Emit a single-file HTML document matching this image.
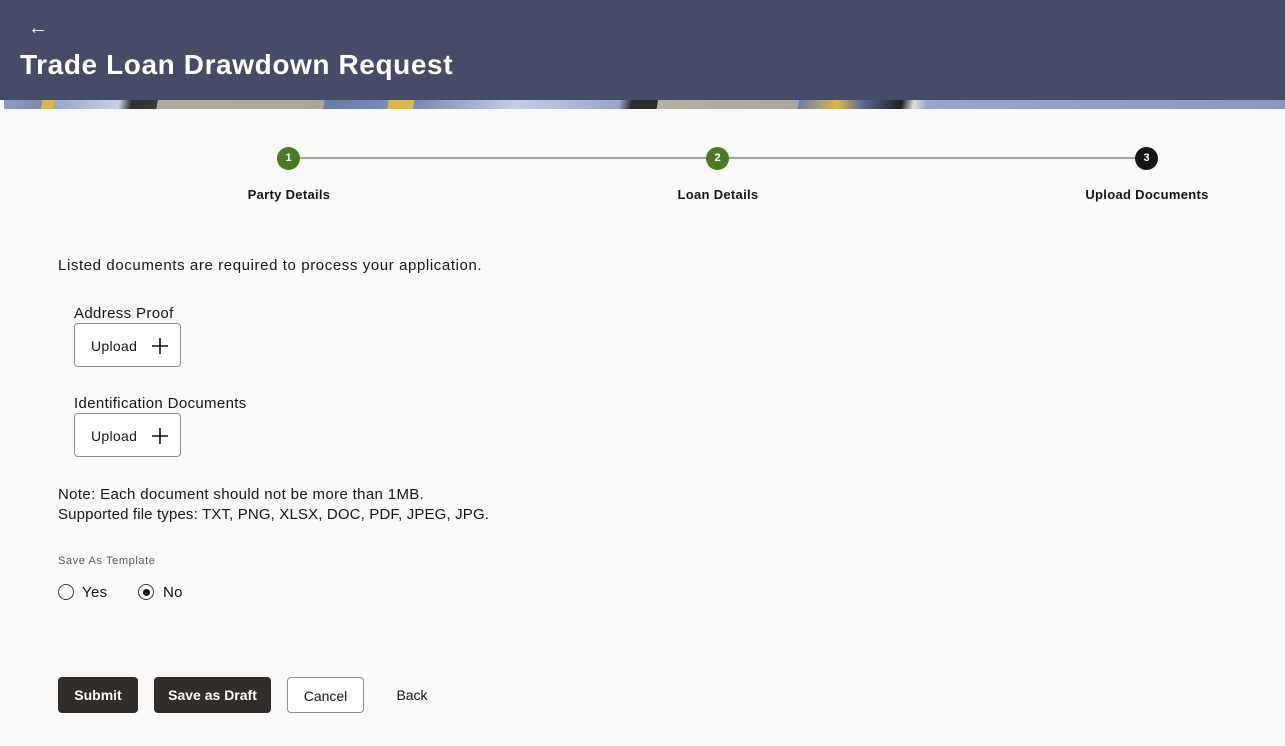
<!DOCTYPE html>
<html><head><meta charset="utf-8"><style>
*{box-sizing:border-box;margin:0;padding:0}
body{width:1285px;height:746px;overflow:hidden;background:#faf9f8;font-family:"Liberation Sans",sans-serif;color:#161513;position:relative}
.hdr{position:absolute;left:0;top:0;width:1285px;height:100px;background:#464b68}
.band{position:absolute;left:4px;top:100px;width:1281px;height:9px;background:linear-gradient(100deg,#8f9bc0 0,#7e8ab0 3%,#d8b84a 3%,#d8b84a 4%,#9aa6c8 4%,#c9d0e8 9%,#2e2e30 10%,#3a3a3a 12%,#b0aaa0 12%,#aaa59c 25%,#6c7aa8 25%,#7d8ab5 30%,#d9b84c 30%,#d9b84c 32%,#7a86ae 32%,#c5cde8 40%,#9aa4c8 48%,#2d2d30 49%,#2d2d30 51%,#b5b0a8 51%,#a9a59e 62%,#6f7ca8 62%,#dab94a 65%,#5c6894 67%,#1f1f22 70%,#e0e0e0 71%,#9aa5cb 72%,#8a96bd 100%)}
.back{position:absolute;left:28px;top:17px;color:#fff;font-size:20px}
h1{position:absolute;left:20px;top:49px;color:#fff;font-size:28px;font-weight:bold;letter-spacing:0.6px}
.line{position:absolute;top:157px;left:289px;width:858px;height:2px;background:#a6a4a0}
.dot{position:absolute;top:147px;width:23px;height:23px;border-radius:50%;background:#4b7a22;color:#fff;font-size:11px;font-weight:bold;text-align:center;line-height:23px}
.lbl{position:absolute;top:187px;font-size:13px;font-weight:bold;transform:translateX(-50%);white-space:nowrap;letter-spacing:0.3px}
.t{position:absolute;font-size:15px;white-space:nowrap;letter-spacing:0.35px}
.up{position:absolute;left:74px;width:107px;height:44px;border:1px solid #8f8d8a;border-radius:4px;background:#fff;font-size:14px;letter-spacing:0.3px}
.up span{position:absolute;left:16px;top:14px}
.up svg{position:absolute;left:75px;top:12px}
.radio{position:absolute;top:584px;width:16px;height:16px;border:1px solid #3b3a38;border-radius:50%;background:#fff}
.btn{position:absolute;top:677px;height:36px;border-radius:4px;font-size:14px;text-align:center;line-height:37px}
.dark{background:#312d2a;color:#fff;font-weight:bold}
</style></head><body>
<div class="hdr"></div><div class="band"></div>
<div class="back">&#8592;</div>
<h1>Trade Loan Drawdown Request</h1>
<div class="line"></div>
<div class="dot" style="left:277px">1</div>
<div class="dot" style="left:706px">2</div>
<div class="dot" style="left:1135px;background:#161513">3</div>
<div class="lbl" style="left:289px">Party Details</div>
<div class="lbl" style="left:718px">Loan Details</div>
<div class="lbl" style="left:1147px">Upload Documents</div>
<div class="t" style="left:58px;top:257px;letter-spacing:0.6px">Listed documents are required to process your application.</div>
<div class="t" style="left:74px;top:305px">Address Proof</div>
<div class="up" style="top:323px"><span>Upload</span><svg width="20" height="20" viewBox="0 0 20 20"><path d="M10 2v16M2 10h16" stroke="#161513" stroke-width="1.6"/></svg></div>
<div class="t" style="left:74px;top:395px">Identification Documents</div>
<div class="up" style="top:413px"><span>Upload</span><svg width="20" height="20" viewBox="0 0 20 20"><path d="M10 2v16M2 10h16" stroke="#161513" stroke-width="1.6"/></svg></div>
<div class="t" style="left:58px;top:486px">Note: Each document should not be more than 1MB.</div>
<div class="t" style="left:58px;top:506px;letter-spacing:0.15px">Supported file types: TXT, PNG, XLSX, DOC, PDF, JPEG, JPG.</div>
<div class="t" style="left:58px;top:555px;font-size:11px;color:#5b5a57;letter-spacing:0.6px">Save As Template</div>
<div class="radio" style="left:58px"></div>
<div class="t" style="left:82px;top:584px">Yes</div>
<div class="radio" style="left:138px"><div style="position:absolute;left:3.5px;top:3.5px;width:7px;height:7px;border-radius:50%;background:#161513"></div></div>
<div class="t" style="left:163px;top:584px">No</div>
<div class="btn dark" style="left:58px;width:80px">Submit</div>
<div class="btn dark" style="left:154px;width:117px">Save as Draft</div>
<div class="btn" style="left:287px;width:77px;border:1px solid #8f8d8a;background:#fff">Cancel</div>
<div class="btn" style="left:380px;width:64px">Back</div>
</body></html>
